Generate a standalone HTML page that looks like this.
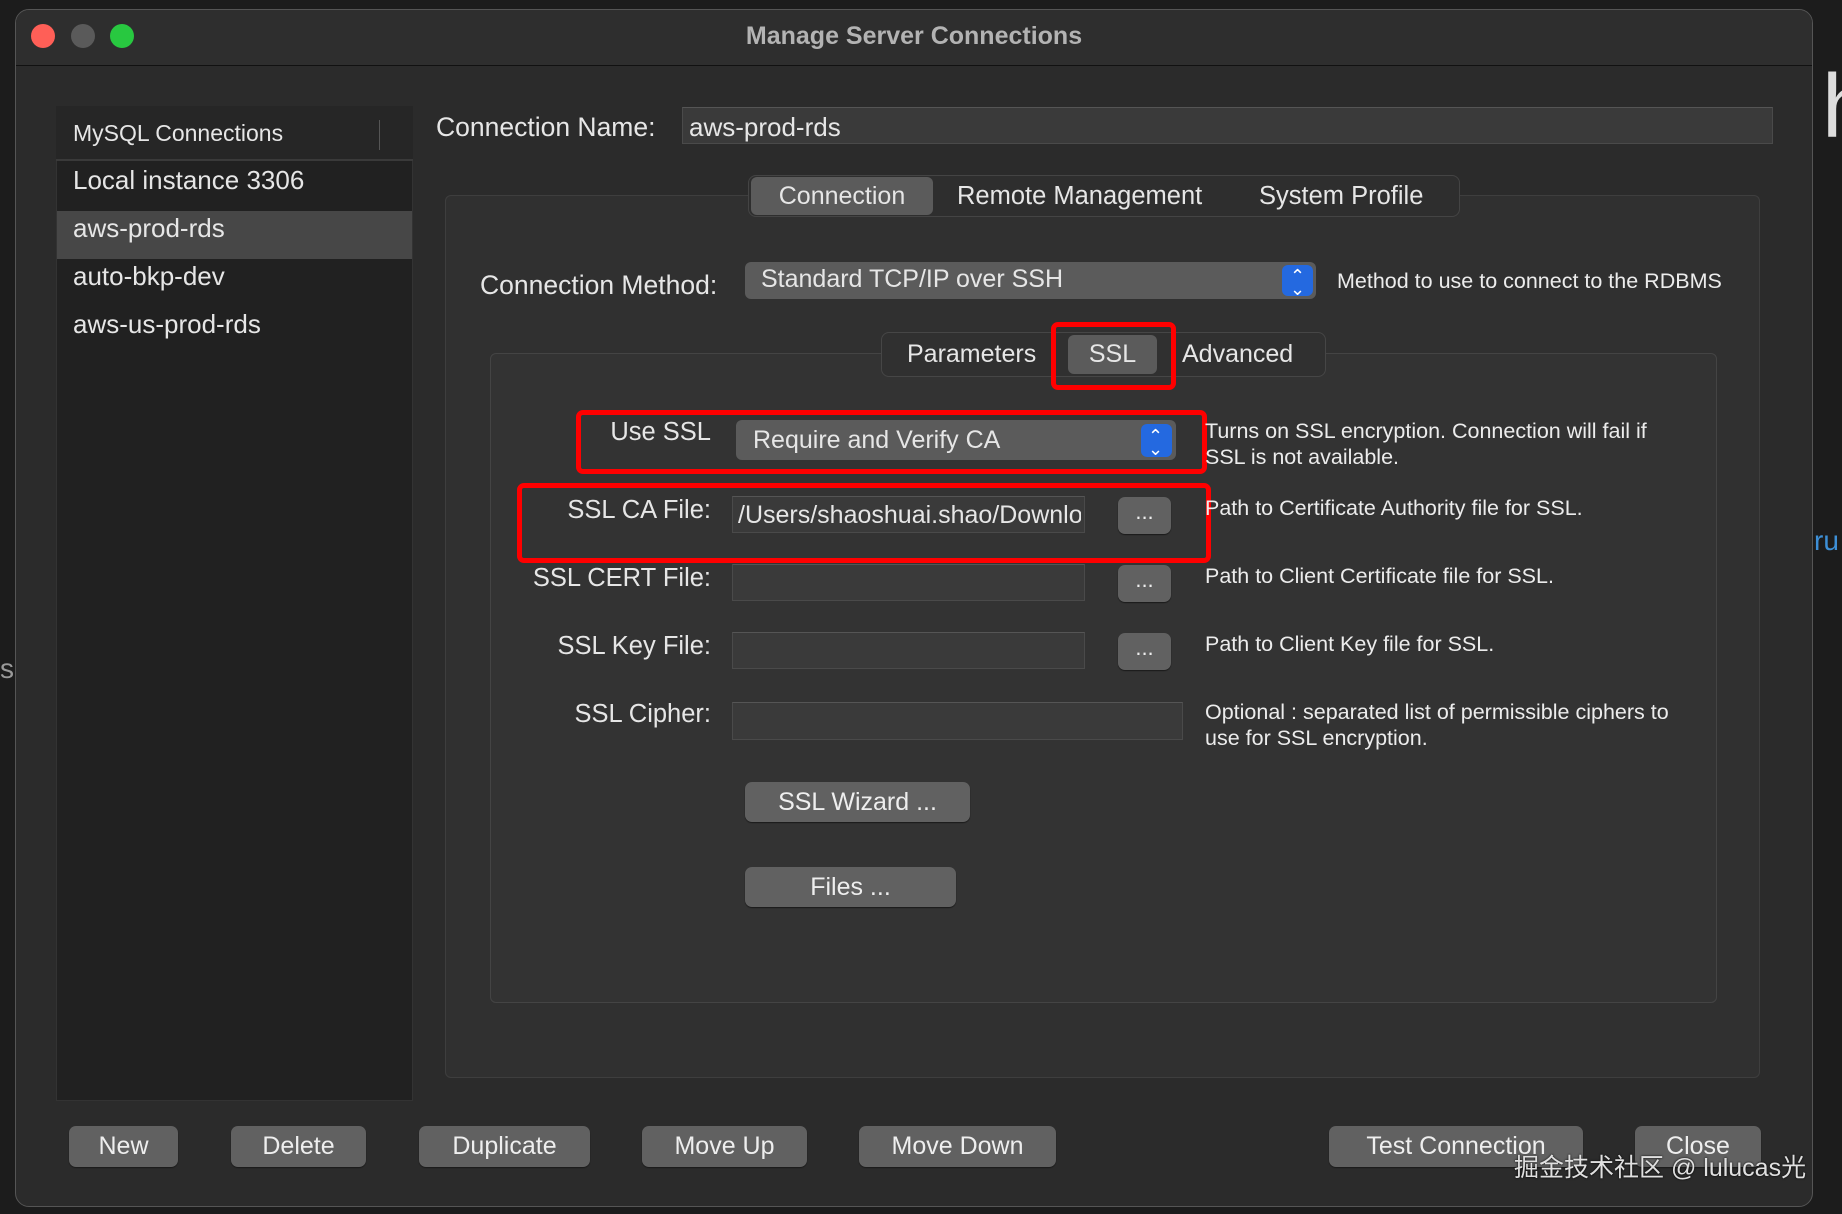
<!DOCTYPE html>
<html><head><meta charset="utf-8"><style>
*{box-sizing:border-box;margin:0;padding:0}
body{width:1842px;height:1214px;background:#1c1c1c;position:relative;overflow:hidden;font-family:"Liberation Sans","Noto Sans CJK SC",sans-serif;color:#e6e6e6}
.a{position:absolute}
.win{left:15px;top:9px;width:1798px;height:1198px;background:#2b2b2b;border-radius:14px;border:1px solid #555;overflow:hidden}
.title{left:0;top:0;width:100%;height:56px;background:#2e2e2e;border-bottom:1px solid #111}
.dot{width:24px;height:24px;border-radius:50%;top:14px}
.t{white-space:nowrap;font-size:25px;line-height:1}
.lbl{font-size:25.5px;white-space:nowrap;text-align:right;line-height:1}
.inp{background:#3a3a3a;border:1px solid #4a4a4a;border-top-color:#555}
.btn{background:#616161;border-radius:7px;text-align:center;font-size:25px;color:#eee;box-shadow:0 1px 1px #1a1a1a}
.help{font-size:21.5px;color:#ececec;line-height:26px;white-space:nowrap}
.red{border:5px solid #f00;border-radius:7px}
.sel{background:#5b5b5b;border-radius:6px}
.step{background:#2469e0;border-radius:6px;width:31px;height:31px}
</style></head><body>
<div class="a t" style="left:1822px;top:62px;font-size:90px;color:#ddd">h</div>
<div class="a t" style="left:1814px;top:527px;font-size:28px;color:#3d8fd6">ru</div>
<div class="a t" style="left:0;top:655px;font-size:28px;color:#999">s</div>
<div class="a win">
 <div class="a title"></div>
 <div class="a dot" style="left:15px;background:#ff5f57"></div>
 <div class="a dot" style="left:55px;background:#5a5a5a"></div>
 <div class="a dot" style="left:94px;background:#28c840"></div>
 <div class="a t" style="left:0;width:100%;text-align:center;top:14px;font-size:25px;font-weight:bold;color:#b3b3b3">Manage Server Connections</div>

 <div class="a" style="left:40px;top:96px;width:357px;height:995px;background:#212121;border:1px solid #333"></div>
 <div class="a" style="left:40px;top:96px;width:357px;height:55px;background:#262626;border-bottom:2px solid #3a3a3a"></div>
 <div class="a" style="left:363px;top:110px;width:1px;height:30px;background:#555"></div>
 <div class="a t" style="left:57px;top:112px;font-size:23px">MySQL Connections</div>
 <div class="a t" style="left:57px;top:157px;font-size:26px">Local instance 3306</div>
 <div class="a" style="left:41px;top:201px;width:355px;height:48px;background:#474747"></div>
 <div class="a t" style="left:57px;top:205px;font-size:26px">aws-prod-rds</div>
 <div class="a t" style="left:57px;top:253px;font-size:26px">auto-bkp-dev</div>
 <div class="a t" style="left:57px;top:301px;font-size:26px">aws-us-prod-rds</div>

 <div class="a t" style="left:420px;top:104px;font-size:26.5px">Connection Name:</div>
 <div class="a inp" style="left:666px;top:97px;width:1091px;height:37px"></div>
 <div class="a t" style="left:673px;top:104px;font-size:26px">aws-prod-rds</div>

 <div class="a" style="left:429px;top:185px;width:1315px;height:883px;background:#303030;border:1px solid #3e3e3e;border-radius:6px"></div>
 <div class="a" style="left:732px;top:165px;width:712px;height:42px;background:#2e2e2e;border:1px solid #444;border-radius:8px"></div>
 <div class="a sel" style="left:735px;top:167px;width:182px;height:38px"></div>
 <div class="a t" style="left:735px;width:182px;text-align:center;top:174px">Connection</div>
 <div class="a t" style="left:941px;top:174px;font-size:25.5px">Remote Management</div>
 <div class="a t" style="left:1243px;top:174px;font-size:25.5px">System Profile</div>

 <div class="a t" style="left:464px;top:262px;font-size:26.5px">Connection Method:</div>
 <div class="a sel" style="left:729px;top:252px;width:571px;height:37px"></div>
 <div class="a t" style="left:745px;top:257px">Standard TCP/IP over SSH</div>
 <div class="a step" style="left:1266px;top:255px"></div>
 <div class="a t" style="left:1274px;top:257px;font-size:18px;color:#fff">⌃</div><div class="a t" style="left:1274px;top:270px;font-size:18px;color:#fff">⌄</div>
 <div class="a help" style="left:1321px;top:258px">Method to use to connect to the RDBMS</div>

 <div class="a" style="left:474px;top:343px;width:1227px;height:650px;background:#333;border:1px solid #444;border-radius:6px"></div>
 <div class="a" style="left:865px;top:322px;width:445px;height:45px;background:#303030;border:1px solid #464646;border-radius:8px"></div>
 <div class="a t" style="left:891px;top:332px">Parameters</div>
 <div class="a sel" style="left:1052px;top:325px;width:89px;height:39px"></div>
 <div class="a t" style="left:1052px;width:89px;text-align:center;top:332px">SSL</div>
 <div class="a t" style="left:1166px;top:332px">Advanced</div>
 <div class="a red" style="left:1035px;top:312px;width:125px;height:68px"></div>

 <div class="a lbl" style="left:460px;width:235px;top:410px">Use SSL</div>
 <div class="a sel" style="left:720px;top:410px;width:440px;height:40px"></div>
 <div class="a t" style="left:737px;top:418px">Require and Verify CA</div>
 <div class="a step" style="left:1125px;top:414px;height:33px"></div>
 <div class="a t" style="left:1132px;top:417px;font-size:18px;color:#fff">⌃</div><div class="a t" style="left:1132px;top:430px;font-size:18px;color:#fff">⌄</div>
 <div class="a red" style="left:560px;top:400px;width:631px;height:64px"></div>
 <div class="a help" style="left:1189px;top:408px">Turns on SSL encryption. Connection will fail if<br>SSL is not available.</div>

 <div class="a lbl" style="left:460px;width:235px;top:488px">SSL CA File:</div>
 <div class="a inp" style="left:716px;top:486px;width:353px;height:37px;overflow:hidden"></div>
 <div class="a t" style="left:722px;top:493px;width:343px;overflow:hidden;font-size:25px">/Users/shaoshuai.shao/Downloads</div>
 <div class="a btn" style="left:1102px;top:487px;width:53px;height:37px;line-height:30px;font-size:22px">...</div>
 <div class="a red" style="left:501px;top:473px;width:694px;height:80px"></div>
 <div class="a help" style="left:1189px;top:485px">Path to Certificate Authority file for SSL.</div>

 <div class="a lbl" style="left:460px;width:235px;top:556px">SSL CERT File:</div>
 <div class="a inp" style="left:716px;top:554px;width:353px;height:37px"></div>
 <div class="a btn" style="left:1102px;top:555px;width:53px;height:37px;line-height:30px;font-size:22px">...</div>
 <div class="a help" style="left:1189px;top:553px">Path to Client Certificate file for SSL.</div>

 <div class="a lbl" style="left:460px;width:235px;top:624px">SSL Key File:</div>
 <div class="a inp" style="left:716px;top:622px;width:353px;height:37px"></div>
 <div class="a btn" style="left:1102px;top:623px;width:53px;height:37px;line-height:30px;font-size:22px">...</div>
 <div class="a help" style="left:1189px;top:621px">Path to Client Key file for SSL.</div>

 <div class="a lbl" style="left:460px;width:235px;top:692px">SSL Cipher:</div>
 <div class="a inp" style="left:716px;top:692px;width:451px;height:38px"></div>
 <div class="a help" style="left:1189px;top:689px">Optional : separated list of permissible ciphers to<br>use for SSL encryption.</div>

 <div class="a btn" style="left:729px;top:772px;width:225px;height:40px;line-height:40px">SSL Wizard ...</div>
 <div class="a btn" style="left:729px;top:857px;width:211px;height:40px;line-height:40px">Files ...</div>

 <div class="a btn" style="left:53px;top:1116px;width:109px;height:41px;line-height:41px">New</div>
 <div class="a btn" style="left:215px;top:1116px;width:135px;height:41px;line-height:41px">Delete</div>
 <div class="a btn" style="left:403px;top:1116px;width:171px;height:41px;line-height:41px">Duplicate</div>
 <div class="a btn" style="left:626px;top:1116px;width:165px;height:41px;line-height:41px">Move Up</div>
 <div class="a btn" style="left:843px;top:1116px;width:197px;height:41px;line-height:41px">Move Down</div>
 <div class="a btn" style="left:1313px;top:1116px;width:254px;height:41px;line-height:41px">Test Connection</div>
 <div class="a btn" style="left:1619px;top:1116px;width:126px;height:41px;line-height:41px">Close</div>
</div>
<div class="a t" style="left:1514px;top:1156px;font-size:25px;color:#e0e0e0;text-shadow:0 0 2px #000">掘金技术社区 @ lulucas光</div>
</body></html>
